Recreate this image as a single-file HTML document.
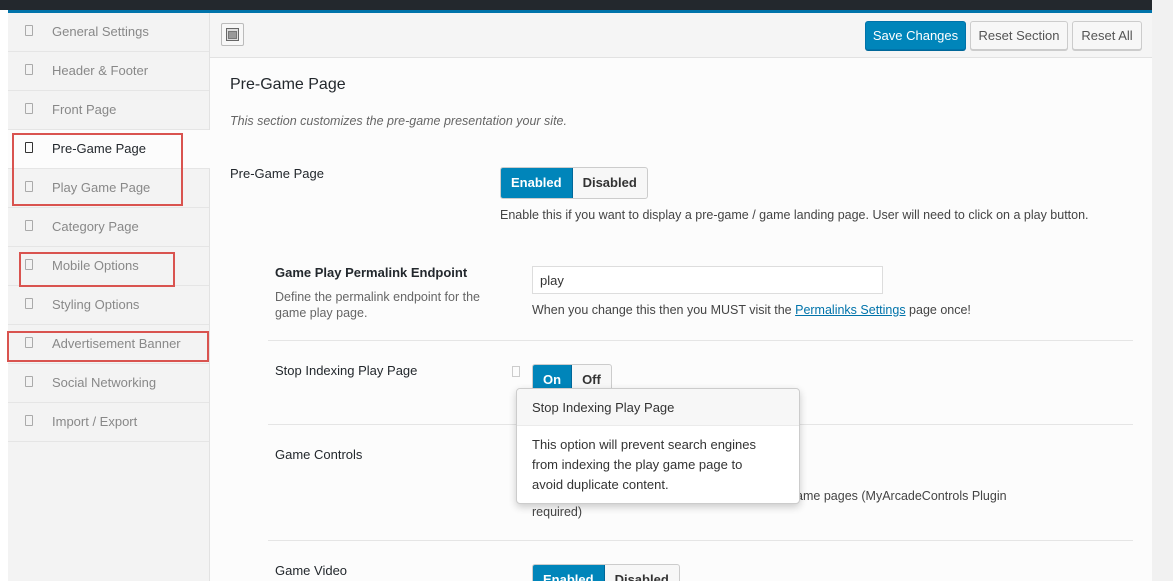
<!DOCTYPE html>
<html><head><style>
*{margin:0;padding:0;box-sizing:border-box}
html,body{width:1173px;height:581px;overflow:hidden}
body{background:#f1f1f1;font-family:"Liberation Sans",sans-serif;font-size:13px;color:#23282d;position:relative}
.a{position:absolute}
.top{left:0;top:0;width:1152px;height:10px;background:#23282d}
.blue{left:8px;top:10px;width:1144px;height:3px;background:#0073aa}
.side{left:8px;top:13px;width:202px;height:568px;background:#f3f3f3;border-right:1px solid #e2e2e2}
.item{position:absolute;left:0;width:201px;height:39px;border-bottom:1px solid #e5e5e5;color:#888;font-size:13px;line-height:38px;padding-left:44px}
.item.act{background:#fcfcfc;color:#23282d;width:202px}
.item i{position:absolute;left:17px;top:12px;width:8px;height:11px;border:1px solid #aaa;border-radius:1px}
.item.act i{border-color:#333}
.main{left:210px;top:13px;width:942px;height:568px;background:#fcfcfc}
.hdr{left:210px;top:13px;width:942px;height:45px;background:#f5f5f5;border-bottom:1px solid #e2e2e2}
.btn{position:absolute;top:21px;height:29px;border:1px solid #ccc;background:#f7f7f7;border-radius:3px;color:#555;font-size:13px;line-height:27px;text-align:center;box-shadow:0 1px 0 #ccc}
.red{position:absolute;border:2px solid #d9534f}
.tog{position:absolute;height:32px;border:1px solid #ccc;border-radius:3px;background:#f7f7f7;font-weight:bold;font-size:13px;line-height:30px;display:flex;overflow:hidden}
.tog span{padding:0 10px;color:#333}
.tog span.on{background:#0085ba;color:#fff;border-right:1px solid #006799}
.sep{position:absolute;left:268px;width:865px;height:1px;background:#e5e5e5}
.desc{position:absolute;color:#666;font-size:12.5px;line-height:16px;white-space:nowrap}
</style></head><body>
<div class="a" style="left:0;top:10px;width:8px;height:571px;background:#fff"></div>
<div class="a top"></div><div class="a blue"></div>
<div class="a side">
<div class="item" style="top:0"><i></i>General Settings</div>
<div class="item" style="top:39px"><i></i>Header &amp; Footer</div>
<div class="item" style="top:78px"><i></i>Front Page</div>
<div class="item act" style="top:117px"><i></i>Pre-Game Page</div>
<div class="item" style="top:156px"><i></i>Play Game Page</div>
<div class="item" style="top:195px"><i></i>Category Page</div>
<div class="item" style="top:234px"><i></i>Mobile Options</div>
<div class="item" style="top:273px"><i></i>Styling Options</div>
<div class="item" style="top:312px"><i></i>Advertisement Banner</div>
<div class="item" style="top:351px"><i></i>Social Networking</div>
<div class="item" style="top:390px"><i></i>Import / Export</div>
</div>
<div class="red" style="left:12px;top:133px;width:171px;height:73px"></div>
<div class="red" style="left:19px;top:252px;width:156px;height:35px"></div>
<div class="red" style="left:7px;top:331px;width:202px;height:31px"></div>
<div class="a main"></div>
<div class="a hdr"></div>
<div class="a" style="left:221px;top:23px;width:23px;height:23px;border:1px solid #bbb;border-radius:2px;background:#f7f7f7"><div style="position:absolute;left:4px;top:4px;width:13px;height:13px;border:1px solid #666;background:#ddd"><div style="position:absolute;left:1px;top:2px;width:9px;height:8px;background:#999;border:1px solid #777"></div></div></div>
<div class="btn" style="left:865px;width:101px;background:#0085ba;border-color:#0073aa;color:#fff;box-shadow:0 1px 0 #006799">Save Changes</div>
<div class="btn" style="left:970px;width:98px">Reset Section</div>
<div class="btn" style="left:1072px;width:70px">Reset All</div>
<div class="a" style="left:230px;top:76px;font-size:16px;color:#23282d">Pre-Game Page</div>
<div class="a" style="left:230px;top:114px;font-style:italic;color:#666;font-size:12.5px">This section customizes the pre-game presentation your site.</div>
<div class="a" style="left:230px;top:166px">Pre-Game Page</div>
<div class="tog" style="left:500px;top:167px"><span class="on">Enabled</span><span>Disabled</span></div>
<div class="desc" style="left:500px;top:207px;color:#444">Enable this if you want to display a pre-game / game landing page. User will need to click on a play button.</div>
<div class="a" style="left:275px;top:265px;font-weight:bold">Game Play Permalink Endpoint</div>
<div class="desc" style="left:275px;top:289px">Define the permalink endpoint for the<br>game play page.</div>
<div class="a" style="left:532px;top:266px;width:351px;height:28px;border:1px solid #ddd;background:#fff;padding:6px 7px;font-size:13px;color:#333">play</div>
<div class="desc" style="left:532px;top:302px;color:#444">When you change this then you MUST visit the <span style="color:#0073aa;text-decoration:underline">Permalinks Settings</span> page once!</div>
<div class="sep" style="top:340px"></div>
<div class="a" style="left:275px;top:363px">Stop Indexing Play Page</div>
<div class="a" style="left:512px;top:366px;width:8px;height:11px;border:1px solid #ccc"></div>
<div class="tog" style="left:532px;top:364px"><span class="on">On</span><span>Off</span></div>
<div class="sep" style="top:424px"></div>
<div class="a" style="left:275px;top:447px">Game Controls</div>
<div class="desc" style="left:532px;top:488px;color:#444">Enable this to display game controls on single game pages (MyArcadeControls Plugin</div>
<div class="desc" style="left:532px;top:504px;color:#444">required)</div>
<div class="sep" style="top:540px"></div>
<div class="a" style="left:275px;top:563px">Game Video</div>
<div class="tog" style="left:532px;top:564px"><span class="on">Enabled</span><span>Disabled</span></div>
<div class="a" style="left:516px;top:388px;width:284px;height:116px;background:#fff;border:1px solid #ccc;border-radius:4px;box-shadow:0 3px 8px rgba(0,0,0,.2)">
<div style="height:37px;background:#f7f7f7;border-bottom:1px solid #ebebeb;padding:11px 15px;font-size:13px;color:#333;border-radius:4px 4px 0 0">Stop Indexing Play Page</div>
<div style="padding:9px 25px 10px 15px;font-size:13px;line-height:20px;color:#333">This option will prevent search engines from indexing the play game page to avoid duplicate content.</div>
</div>
</body></html>
